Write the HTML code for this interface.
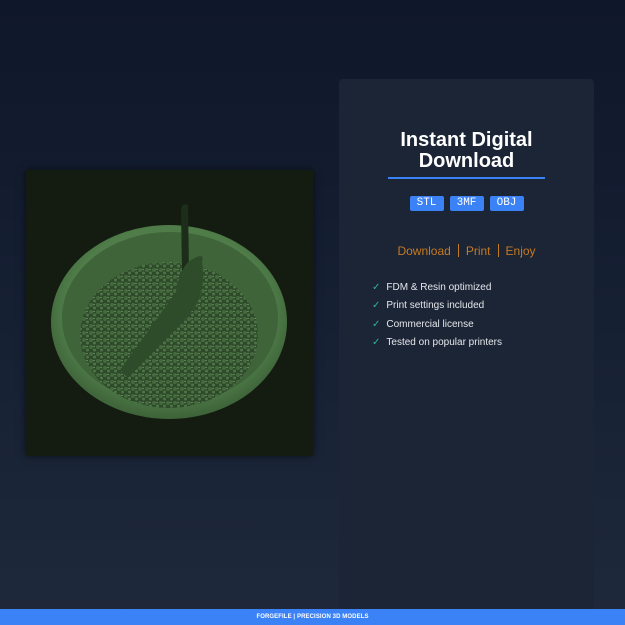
<!DOCTYPE html>
<html><head><meta charset="utf-8"><style>
*{margin:0;padding:0;box-sizing:border-box}
body{width:625px;height:625px;overflow:hidden;position:relative;background:linear-gradient(180deg,#0f172a 0%,#162033 50%,#1e293b 100%);font-family:"Liberation Sans",sans-serif}
.panel{position:absolute;left:339px;top:79px;width:255px;height:530px;background:#1c2536;border-radius:4px}
h1{position:absolute;left:0;width:255px;top:51px;text-align:center;color:#fff;font-size:20px;line-height:21px;font-weight:bold}
.rule{position:absolute;left:49px;top:98px;width:157px;height:2px;background:#3b82f6}
.tags{position:absolute;top:117px;left:0;width:255px;text-align:center;font-size:0}
.tag{display:inline-block;background:#3b82f6;color:#fff;font-family:"Liberation Mono",monospace;font-size:11px;height:15px;line-height:15px;width:34px;margin:0 3px;border-radius:2px}
.dpe{position:absolute;top:165px;left:0;width:255px;text-align:center;color:#c57a22;font-size:12px}
.dpe span{display:inline-block;width:1px;height:13px;background:#c57a22;vertical-align:-2px;margin:0 7px}
ul{position:absolute;left:33px;top:200px;list-style:none;color:#e5e7eb;font-size:10px}
li{height:18.3px;line-height:18px}
li b{color:#2fb58f;font-weight:normal;margin-right:6px}
.img{position:absolute;left:26px;top:170px;width:287px;height:286px;background:#141c12;box-shadow:0 0 8px rgba(0,0,0,.6)}
.foot{position:absolute;left:0;top:609px;width:625px;height:16px;background:#3b82f6;color:#fff;font-size:6px;font-weight:bold;text-align:center;line-height:16px;letter-spacing:.1px}
</style></head><body>
<div class="img"><svg width="287" height="286">
<defs><pattern id="g" width="7" height="7" patternUnits="userSpaceOnUse"><rect width="7" height="7" fill="#2f4a2b"/><circle cx="2" cy="2" r="2" fill="#436a3d"/><circle cx="5.5" cy="5" r="1.5" fill="#4c7546"/><circle cx="5" cy="1.5" r=".6" fill="#8fb585"/></pattern>
<radialGradient id="b" cx="50%" cy="45%" r="55%"><stop offset="80%" stop-color="#4f7c49"/><stop offset="100%" stop-color="#3d6238"/></radialGradient></defs>
<ellipse cx="143" cy="152" rx="118" ry="97" fill="url(#b)"/>
<ellipse cx="144" cy="148" rx="108" ry="86" fill="#3f643a"/>
<ellipse cx="143" cy="165" rx="89" ry="73" fill="url(#g)"/>
<path d="M155 40 Q156 32 162 35 L163 100 L156 102Z" fill="#1c2e1a"/>
<path d="M176 92 Q180 80 162 92 Q152 104 150 122 L94 200 L102 208 L158 150 Q182 128 176 92Z" fill="#2f4c2a"/>
</svg></div>
<div class="panel">
<h1>Instant Digital<br>Download</h1>
<div class="rule"></div>
<div class="tags"><span class="tag">STL</span><span class="tag">3MF</span><span class="tag">OBJ</span></div>
<div class="dpe">Download<span></span>Print<span></span>Enjoy</div>
<ul><li><b>✓</b>FDM &amp; Resin optimized</li><li><b>✓</b>Print settings included</li><li><b>✓</b>Commercial license</li><li><b>✓</b>Tested on popular printers</li></ul>
</div>
<div class="foot">FORGEFILE | PRECISION 3D MODELS</div>
</body></html>
